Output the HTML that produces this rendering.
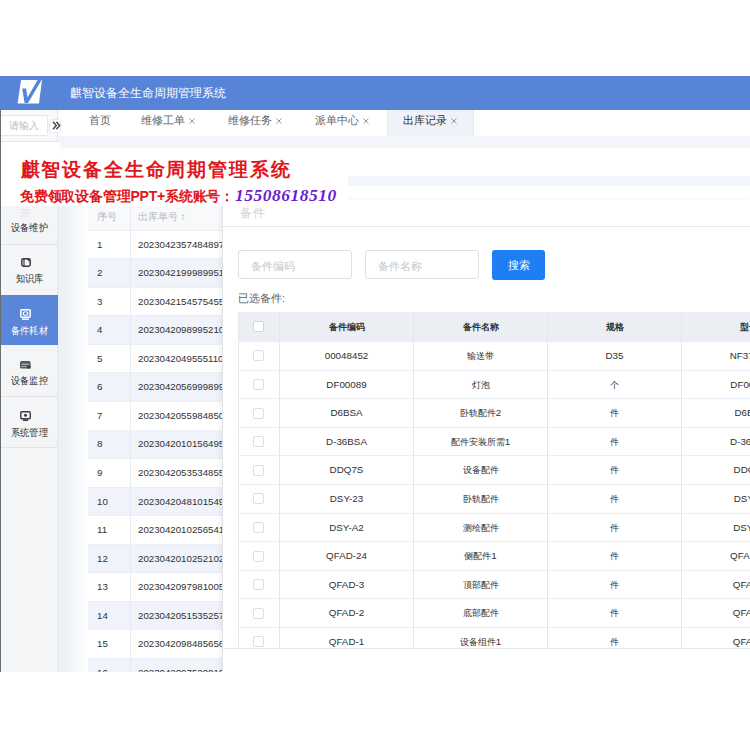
<!DOCTYPE html>
<html><head><meta charset="utf-8"><style>
*{margin:0;padding:0;box-sizing:border-box}
html,body{width:750px;height:750px;overflow:hidden;background:#fff;font-family:"Liberation Sans",sans-serif}
.a{position:absolute}
#hdr{left:0;top:76px;width:750px;height:34px;background:#5784d7}
#logo{left:17px;top:80px;width:26px;height:24px}
#htitle{left:70px;top:86px;font-size:12px;line-height:14px;color:#fff;white-space:nowrap}
#app{left:0;top:110px;width:750px;height:562px;background:#fff;overflow:hidden}
#lline{left:0;top:110px;width:1px;height:562px;background:#6a6d72}
#side{left:1px;top:0;width:57px;height:562px;background:#f4f5f7;border-right:1px solid #e6e8ec}
.tab{position:absolute;top:0;height:26px;font-size:10.5px;line-height:21px;color:#606266;white-space:nowrap;padding-left:16px}
.tab svg{position:absolute;top:8px;width:6px;height:6px}
.tab.on{background:#eff2f8;color:#303133;border-left:1px solid #e4e7ed;border-right:1px solid #e4e7ed;padding-left:15px}
.band{position:absolute;background:#f2f5f9}
.sitem{position:absolute;left:0;width:57px;border-bottom:1px solid #e2e4e8;text-align:center;font-size:10px;color:#303133}
.sitem.on{background:#5986d8;color:#fff;border-bottom-color:#5986d8}
.sitem .ic{position:absolute;left:19px;width:11px;height:10px}
.sitem .tx{position:absolute;left:0;width:57px;line-height:12px;white-space:nowrap;transform:scaleX(0.92);transform-origin:28.5px 0}
.brow{position:absolute;left:88px;width:140px;height:28.6px;font-size:9.7px;color:#303133;border-bottom:1px solid #ebeef5;background:#fff}
.brow.s{background:#f0f4fa}
.brow .c1{position:absolute;left:9px;top:9px;line-height:10px}
.brow .c2{position:absolute;left:50px;top:9px;line-height:10px;white-space:nowrap}
.brow .vl{position:absolute;left:42px;top:0;width:1px;height:100%;background:#e8ebf0}
#modal{left:222px;top:200px;width:528px;height:472px;background:#fff;box-shadow:-2px 0 5px rgba(0,0,0,0.06);overflow:hidden}
.inp{position:absolute;top:50px;height:29px;border:1px solid #dcdfe6;border-radius:3px;font-size:11px;color:#c4c7cd;line-height:31px;padding-left:12px}
#btn{position:absolute;left:270px;top:50px;width:53px;height:29.5px;background:#1e7ef4;border-radius:3px;color:#fff;font-size:11px;line-height:31px;text-align:center}
.mrow{position:absolute;left:16px;width:520px;height:28.6px;border-bottom:1px solid #ebeef5;font-size:9.8px;color:#303133;background:#fff}
.mrow.h{background:#ebeef3;font-weight:bold;height:30.5px}
.mrow div{position:absolute;top:0;height:100%;line-height:27px;text-align:center;border-right:1px solid #e3e6eb;white-space:nowrap;overflow:hidden}
.mrow.h div{line-height:29px}
.cb{display:inline-block;width:11px;height:11px;border:1px solid #dcdfe6;border-radius:2px;background:#fff;vertical-align:middle;margin-top:-1px}
#banner{left:60px;top:148px;width:288px;height:58px;background:rgba(255,255,255,0.94)}
#banner2{left:0;top:142px;width:60px;height:64px;background:rgba(255,255,255,0.94)}
#t1{left:20.5px;top:158.5px;font-size:19px;line-height:22px;color:#e0171c;font-weight:bold;letter-spacing:1.85px;white-space:nowrap}
#t2{left:20px;top:186px;font-size:14px;letter-spacing:-0.2px;line-height:18px;color:#e0171c;font-weight:bold;white-space:nowrap}
#t2 i{font-family:"Liberation Serif",serif;color:#6b1fd1;font-size:17.5px;font-weight:bold;margin-left:1px;letter-spacing:0.5px}
</style></head><body>
<div id="hdr" class="a"></div>
<svg id="logo" class="a" viewBox="0 0 26 24"><polygon points="4,0 25,0 22,23.6 0.6,23.6" fill="#fff"/><polygon points="5.2,8.6 9.2,8.6 10.5,17.5 20.6,0 24.6,0 11,23 7.6,23" fill="#5784d7"/></svg>
<div id="htitle" class="a">麒智设备全生命周期管理系统</div>
<div id="app" class="a">
<div class="band" style="left:58px;top:26px;width:692px;height:12px"></div>
<div class="a" style="left:58px;top:38px;width:28px;height:524px;background:linear-gradient(to right,#ebeff5,#f1f4f8 45%,#fdfdfe)"></div>
<div class="band" style="left:300px;top:66px;width:450px;height:10px"></div>
<div id="side" class="a">
<div class="a" style="left:0;top:0;width:56px;height:31px;background:#f8f9fb"></div>
<div class="a" style="left:0;top:5px;width:47px;height:21px;border:1px solid #e4e6ea;border-left:none;background:#fff;border-radius:0 2px 2px 0;font-size:10px;color:#b8bbc2;line-height:19px;padding-left:8px;white-space:nowrap;overflow:hidden">请输入</div>
<div class="a" style="left:48px;top:9px;width:12px;height:14px;border:1px solid #e6e8ec;border-radius:3px;background:#fff"></div>
<svg class="a" style="left:51px;top:11px;width:9px;height:9px" viewBox="0 0 9 9"><path d="M1 0.8L4.2 4.5L1 8.2M4.4 0.8L7.6 4.5L4.4 8.2" fill="none" stroke="#4a4d52" stroke-width="1.6"/></svg>
<div class="a" style="left:0;top:31px;width:57px;height:1px;background:#e2e4e8"></div>
<div class="sitem" style="top:84px;height:51px"><svg class="ic" style="top:15px;height:8px" viewBox="0 0 11 8"><path d="M1 1H10M1 4H10M1 7H8" stroke="#dcdee2" stroke-width="1"/></svg><div class="tx" style="top:27.5px">设备维护</div></div>
<div class="sitem" style="top:135px;height:51px"><svg class="ic" style="top:13px;left:20px;width:10px;height:9px" viewBox="0 0 10 9"><rect x="0.8" y="0.8" width="8.4" height="7.4" rx="1.6" fill="none" stroke="#3a3c40" stroke-width="1.5"/><path d="M3 1V8" stroke="#3a3c40" stroke-width="1.2"/><path d="M5.5 1H8.5V4Z" fill="#3a3c40"/></svg><div class="tx" style="top:28.0px">知识库</div></div>
<div class="sitem on" style="top:185px;height:50px"><svg class="ic" style="top:13.5px;height:11px" viewBox="0 0 11 11"><rect x="0.8" y="0.8" width="9.4" height="7.4" rx="1" fill="none" stroke="#fff" stroke-width="1.5"/><ellipse cx="5.5" cy="4.5" rx="2.3" ry="1.8" fill="none" stroke="#fff" stroke-width="1.1"/><path d="M2 10.2H9" stroke="#fff" stroke-width="1.4"/></svg><div class="tx" style="top:29.5px">备件耗材</div></div>
<div class="sitem" style="top:235px;height:52px"><svg class="ic" style="top:16px;height:8px" viewBox="0 0 11 8"><rect x="0" y="0" width="10.5" height="7.5" rx="1.5" fill="#55585d"/><path d="M1.5 3.2H9" stroke="#d8dadd" stroke-width="0.9"/><path d="M1.5 5.5H6.5" stroke="#b9bcc0" stroke-width="0.9"/><path d="M8 4.5L10.5 4.5L10.5 7.5L7 7.5Z" fill="#3a3c40"/></svg><div class="tx" style="top:29.8px">设备监控</div></div>
<div class="sitem" style="top:287px;height:51px"><svg class="ic" style="top:14px;height:10px" viewBox="0 0 11 10"><rect x="0.8" y="0.8" width="9.4" height="7" rx="1" fill="none" stroke="#3a3c40" stroke-width="1.4"/><circle cx="5.5" cy="4.3" r="1.5" fill="#3a3c40"/><path d="M3 9.2H8" stroke="#3a3c40" stroke-width="1.6"/></svg><div class="tx" style="top:29.5px">系统管理</div></div>
</div>
<div class="a" style="left:61px;top:0;width:689px;height:26px;background:#fff"></div>
<div class="tab" style="left:73px;width:52px">首页</div>
<div class="tab" style="left:125px;width:87px">维修工单<svg style="left:64px" viewBox="0 0 6 6"><path d="M0.5 0.5L5.5 5.5M5.5 0.5L0.5 5.5" stroke="#8a8d93" stroke-width="0.9"/></svg></div>
<div class="tab" style="left:212px;width:87px">维修任务<svg style="left:64px" viewBox="0 0 6 6"><path d="M0.5 0.5L5.5 5.5M5.5 0.5L0.5 5.5" stroke="#8a8d93" stroke-width="0.9"/></svg></div>
<div class="tab" style="left:299px;width:87px">派单中心<svg style="left:64px" viewBox="0 0 6 6"><path d="M0.5 0.5L5.5 5.5M5.5 0.5L0.5 5.5" stroke="#8a8d93" stroke-width="0.9"/></svg></div>
<div class="tab on" style="left:387px;width:87px">出库记录<svg style="left:63px" viewBox="0 0 6 6"><path d="M0.5 0.5L5.5 5.5M5.5 0.5L0.5 5.5" stroke="#8a8d93" stroke-width="0.9"/></svg></div>
</div>
<div class="a" style="left:88px;top:207px;width:140px;height:24px;background:#f8f9fb;border-bottom:1px solid #ebeef5"><div class="a" style="left:9px;top:4px;font-size:9.7px;color:#b4b8bf">序号</div><div class="a" style="left:50px;top:4px;font-size:9.7px;color:#b4b8bf">出库单号 &#8597;</div><div class="a" style="left:42px;top:0;width:1px;height:24px;background:#e8ebf0"></div></div>
<div class="brow" style="top:230.50px"><div class="vl"></div><div class="c1">1</div><div class="c2">2023042357484897</div></div>
<div class="brow s" style="top:259.07px"><div class="vl"></div><div class="c1">2</div><div class="c2">2023042199989951</div></div>
<div class="brow" style="top:287.64px"><div class="vl"></div><div class="c1">3</div><div class="c2">2023042154575455</div></div>
<div class="brow s" style="top:316.21px"><div class="vl"></div><div class="c1">4</div><div class="c2">2023042098995210</div></div>
<div class="brow" style="top:344.78px"><div class="vl"></div><div class="c1">5</div><div class="c2">2023042049555110</div></div>
<div class="brow s" style="top:373.35px"><div class="vl"></div><div class="c1">6</div><div class="c2">2023042056999899</div></div>
<div class="brow" style="top:401.92px"><div class="vl"></div><div class="c1">7</div><div class="c2">2023042055984850</div></div>
<div class="brow s" style="top:430.49px"><div class="vl"></div><div class="c1">8</div><div class="c2">2023042010156495</div></div>
<div class="brow" style="top:459.06px"><div class="vl"></div><div class="c1">9</div><div class="c2">2023042053534855</div></div>
<div class="brow s" style="top:487.63px"><div class="vl"></div><div class="c1">10</div><div class="c2">2023042048101549</div></div>
<div class="brow" style="top:516.20px"><div class="vl"></div><div class="c1">11</div><div class="c2">2023042010256541</div></div>
<div class="brow s" style="top:544.77px"><div class="vl"></div><div class="c1">12</div><div class="c2">2023042010252102</div></div>
<div class="brow" style="top:573.34px"><div class="vl"></div><div class="c1">13</div><div class="c2">2023042097981005</div></div>
<div class="brow s" style="top:601.91px"><div class="vl"></div><div class="c1">14</div><div class="c2">2023042051535257</div></div>
<div class="brow" style="top:630.48px"><div class="vl"></div><div class="c1">15</div><div class="c2">2023042098485656</div></div>
<div class="brow s" style="top:659.05px"><div class="vl"></div><div class="c1">16</div><div class="c2">2023042097520010</div></div>
<div id="modal" class="a">
<div class="a" style="left:18px;top:6px;font-size:12px;line-height:14px;color:#d0d2d6;letter-spacing:0.5px">备件</div>
<div class="a" style="left:0;top:26px;width:528px;height:1px;background:#e6e6e6"></div>
<div class="inp" style="left:16px;width:114px">备件编码</div>
<div class="inp" style="left:143px;width:114px">备件名称</div>
<div id="btn">搜索</div>
<div class="a" style="left:16px;top:92px;font-size:11px;line-height:13px;color:#606266;white-space:nowrap">已选备件:</div>
<div class="mrow h" style="top:111.50px"><div style="left:0px;width:42px;"><span class="cb" style="border-color:#cfd3da"></span></div><div style="left:42px;width:134px;"><span style="font-size:9px">备件编码</span></div><div style="left:176px;width:134px;"><span style="font-size:9px">备件名称</span></div><div style="left:310px;width:134px;"><span style="font-size:9px">规格</span></div><div style="left:444px;width:134px;"><span style="font-size:9px">型号</span></div></div>
<div class="mrow" style="top:142.00px"><div style="left:0px;width:42px;"><span class="cb"></span></div><div style="left:42px;width:134px;">00048452</div><div style="left:176px;width:134px;"><span style="font-size:9px">输送带</span></div><div style="left:310px;width:134px;">D35</div><div style="left:444px;width:134px;padding-left:4px;">NF3725B</div></div>
<div class="mrow" style="top:170.60px"><div style="left:0px;width:42px;"><span class="cb"></span></div><div style="left:42px;width:134px;">DF00089</div><div style="left:176px;width:134px;"><span style="font-size:9px">灯泡</span></div><div style="left:310px;width:134px;"><span style="font-size:9px">个</span></div><div style="left:444px;width:134px;padding-left:4px;">DF00089</div></div>
<div class="mrow" style="top:199.20px"><div style="left:0px;width:42px;"><span class="cb"></span></div><div style="left:42px;width:134px;">D6BSA</div><div style="left:176px;width:134px;"><span style="font-size:9px">卧轨配件</span>2</div><div style="left:310px;width:134px;"><span style="font-size:9px">件</span></div><div style="left:444px;width:134px;padding-left:4px;">D6BSA</div></div>
<div class="mrow" style="top:227.80px"><div style="left:0px;width:42px;"><span class="cb"></span></div><div style="left:42px;width:134px;">D-36BSA</div><div style="left:176px;width:134px;"><span style="font-size:9px">配件安装所需</span>1</div><div style="left:310px;width:134px;"><span style="font-size:9px">件</span></div><div style="left:444px;width:134px;padding-left:4px;">D-36BSA</div></div>
<div class="mrow" style="top:256.40px"><div style="left:0px;width:42px;"><span class="cb"></span></div><div style="left:42px;width:134px;">DDQ7S</div><div style="left:176px;width:134px;"><span style="font-size:9px">设备配件</span></div><div style="left:310px;width:134px;"><span style="font-size:9px">件</span></div><div style="left:444px;width:134px;padding-left:4px;">DDQ7S</div></div>
<div class="mrow" style="top:285.00px"><div style="left:0px;width:42px;"><span class="cb"></span></div><div style="left:42px;width:134px;">DSY-23</div><div style="left:176px;width:134px;"><span style="font-size:9px">卧轨配件</span></div><div style="left:310px;width:134px;"><span style="font-size:9px">件</span></div><div style="left:444px;width:134px;padding-left:4px;">DSY-23</div></div>
<div class="mrow" style="top:313.60px"><div style="left:0px;width:42px;"><span class="cb"></span></div><div style="left:42px;width:134px;">DSY-A2</div><div style="left:176px;width:134px;"><span style="font-size:9px">测绘配件</span></div><div style="left:310px;width:134px;"><span style="font-size:9px">件</span></div><div style="left:444px;width:134px;padding-left:4px;">DSY-A2</div></div>
<div class="mrow" style="top:342.20px"><div style="left:0px;width:42px;"><span class="cb"></span></div><div style="left:42px;width:134px;">QFAD-24</div><div style="left:176px;width:134px;"><span style="font-size:9px">侧配件</span>1</div><div style="left:310px;width:134px;"><span style="font-size:9px">件</span></div><div style="left:444px;width:134px;padding-left:4px;">QFAD-24</div></div>
<div class="mrow" style="top:370.80px"><div style="left:0px;width:42px;"><span class="cb"></span></div><div style="left:42px;width:134px;">QFAD-3</div><div style="left:176px;width:134px;"><span style="font-size:9px">顶部配件</span></div><div style="left:310px;width:134px;"><span style="font-size:9px">件</span></div><div style="left:444px;width:134px;padding-left:4px;">QFAD-3</div></div>
<div class="mrow" style="top:399.40px"><div style="left:0px;width:42px;"><span class="cb"></span></div><div style="left:42px;width:134px;">QFAD-2</div><div style="left:176px;width:134px;"><span style="font-size:9px">底部配件</span></div><div style="left:310px;width:134px;"><span style="font-size:9px">件</span></div><div style="left:444px;width:134px;padding-left:4px;">QFAD-2</div></div>
<div class="mrow" style="top:428.00px"><div style="left:0px;width:42px;"><span class="cb"></span></div><div style="left:42px;width:134px;">QFAD-1</div><div style="left:176px;width:134px;"><span style="font-size:9px">设备组件</span>1</div><div style="left:310px;width:134px;"><span style="font-size:9px">件</span></div><div style="left:444px;width:134px;padding-left:4px;">QFAD-1</div></div>
<div class="a" style="left:0;top:448px;width:528px;height:30px;background:#fff;border-top:1px solid #e3e6eb"></div>
<div class="a" style="left:16px;top:111.5px;width:1px;height:337px;background:#e6e9ee"></div>
<div class="a" style="left:0;top:0;width:1px;height:472px;background:#e0e2e6"></div>
</div>
<div class="a" style="left:0;top:672px;width:750px;height:78px;background:#fff"></div>
<div id="banner" class="a"></div>
<div id="banner2" class="a"></div>
<div id="t1" class="a">麒智设备全生命周期管理系统</div>
<div id="lline" class="a"></div>
<div id="t2" class="a">免费领取设备管理PPT+系统账号：<i>15508618510</i></div>
</body></html>
